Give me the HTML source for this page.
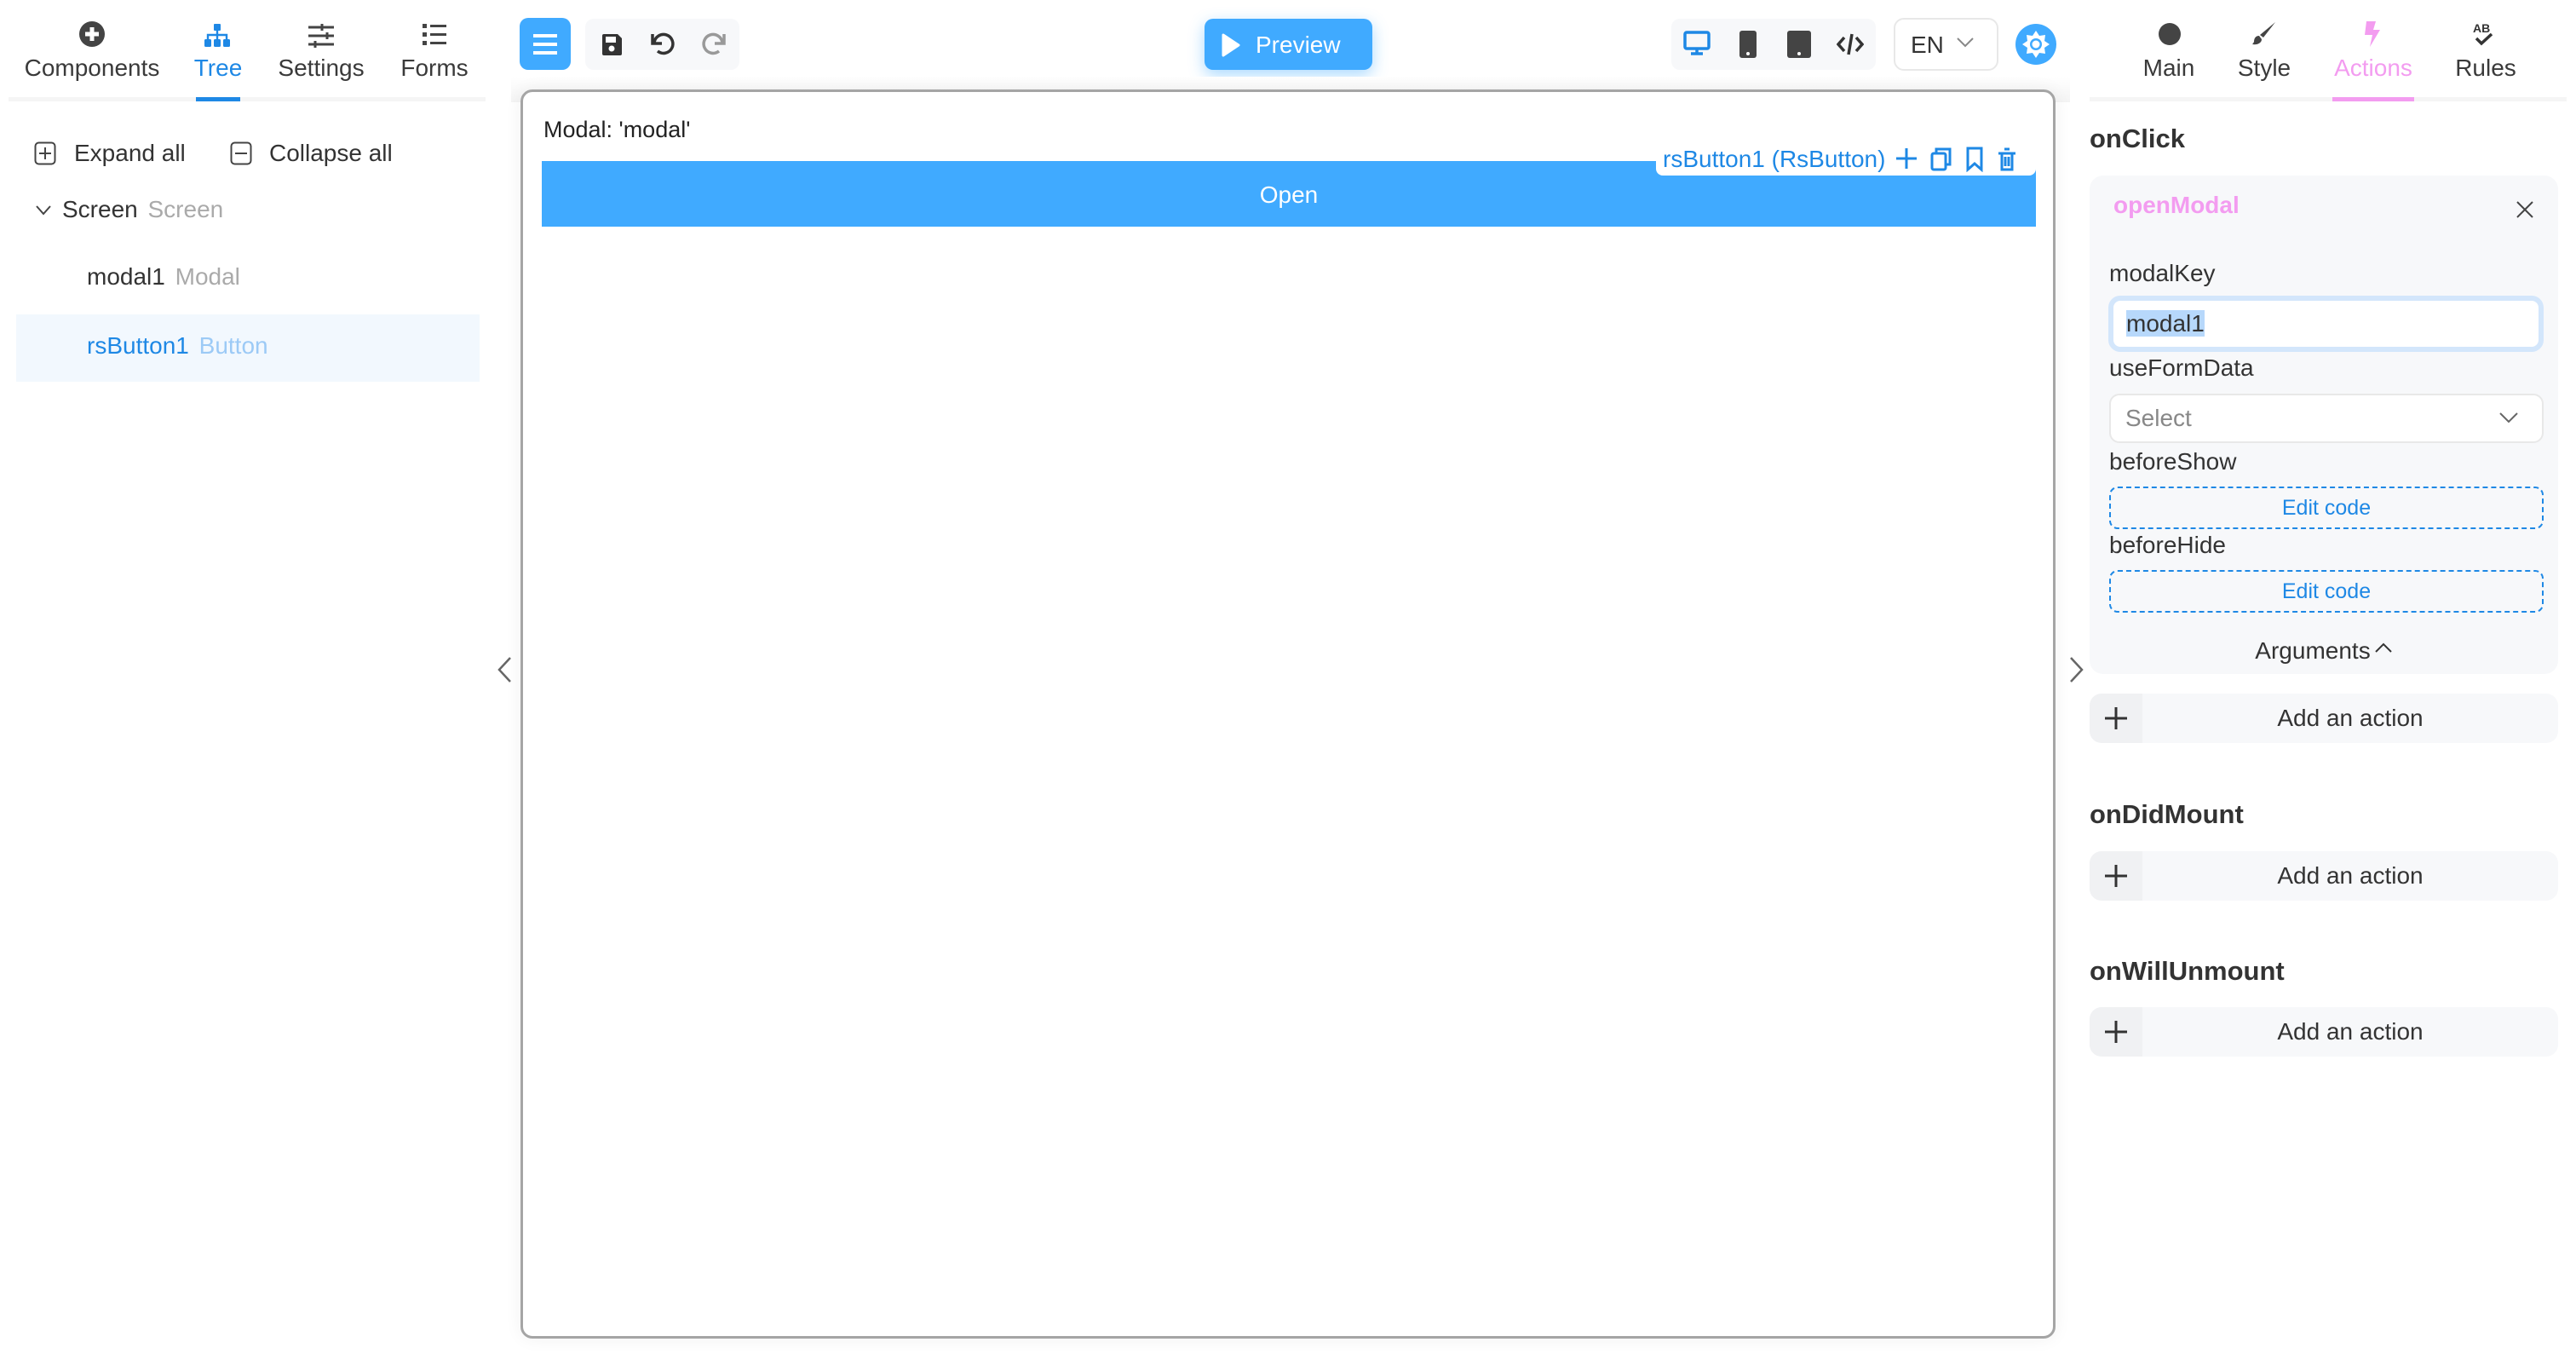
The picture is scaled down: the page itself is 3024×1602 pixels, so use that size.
<!DOCTYPE html>
<html><head><meta charset="utf-8"><style>
*{box-sizing:border-box;margin:0;padding:0}
body{width:3024px;height:1602px;background:#fff;font-family:"Liberation Sans",sans-serif;color:#333;position:relative;overflow:hidden}
.a{position:absolute}
.t{font-size:28px;white-space:nowrap}
.lbl{position:absolute;font-size:28px;color:#333;white-space:nowrap}
.tab{position:absolute;top:64px;font-size:28px;transform:translateX(-50%);white-space:nowrap;color:#3a3a3a}
.row{position:absolute;left:2453px;width:550px;height:58px;background:#f7f8fa;border-radius:14px;overflow:hidden}
.row .p{position:absolute;left:0;top:0;width:62px;height:58px;background:#f0f1f3}
.row .tx{position:absolute;left:62px;right:0;top:0;line-height:58px;text-align:center;font-size:28px;color:#333}
.h{position:absolute;left:2453px;font-size:31px;font-weight:bold;color:#333}
.ec{position:absolute;left:2476px;width:510px;height:50px;border:2px dashed #1e88e5;border-radius:10px;color:#1e88e5;text-align:center;line-height:46px;font-size:25px}
</style></head><body>

<!-- left tabs -->
<svg class="a" style="left:92px;top:24px" width="32" height="32" viewBox="0 0 32 32"><circle cx="16" cy="16" r="15" fill="#444"/><path d="M16 8v16M8 16h16" stroke="#fff" stroke-width="5"/></svg>
<svg class="a" style="left:240px;top:28px" width="30" height="28" viewBox="0 0 30 28"><g fill="#1e88e5"><rect x="11" y="0" width="8" height="8" rx="1"/><rect x="0" y="18" width="8" height="9" rx="1.5"/><rect x="11" y="18" width="8" height="9" rx="1.5"/><rect x="22" y="18" width="8" height="9" rx="1.5"/></g><path d="M15 8v10M4 18v-5h22v5" stroke="#1e88e5" stroke-width="2.4" fill="none"/></svg>
<svg class="a" style="left:362px;top:28px" width="30" height="28" viewBox="0 0 30 28"><g stroke="#444" stroke-width="3"><path d="M0 4h30M0 14h30M0 24h30"/><path d="M16 0v8M22 10v8M8 20v8"/></g></svg>
<svg class="a" style="left:496px;top:28px" width="28" height="26" viewBox="0 0 28 26"><g fill="#444"><rect x="0" y="0" width="5" height="5"/><rect x="0" y="10" width="5" height="5"/><rect x="0" y="20" width="5" height="5"/><rect x="9" y="1" width="19" height="3"/><rect x="9" y="11" width="19" height="3"/><rect x="9" y="21" width="19" height="3"/></g></svg>
<div class="tab" style="left:108px">Components</div>
<div class="tab" style="left:256px;color:#1e88e5">Tree</div>
<div class="tab" style="left:377px">Settings</div>
<div class="tab" style="left:510px">Forms</div>
<div class="a" style="left:10px;top:114px;width:560px;height:5px;background:#f5f5f5"></div>
<div class="a" style="left:230px;top:114px;width:52px;height:5px;background:#1e88e5"></div>

<!-- expand/collapse -->
<svg class="a" style="left:40px;top:166px" width="26" height="28" viewBox="0 0 26 28"><rect x="1.5" y="1.5" width="23" height="25" rx="4" fill="none" stroke="#444" stroke-width="2"/><path d="M13 7v14M6 14h14" stroke="#444" stroke-width="2"/></svg>
<div class="lbl" style="left:87px;top:164px">Expand all</div>
<svg class="a" style="left:270px;top:166px" width="26" height="28" viewBox="0 0 26 28"><rect x="1.5" y="1.5" width="23" height="25" rx="4" fill="none" stroke="#444" stroke-width="2"/><path d="M6 14h14" stroke="#444" stroke-width="2"/></svg>
<div class="lbl" style="left:316px;top:164px">Collapse all</div>
<svg class="a" style="left:42px;top:241px" width="18" height="12" viewBox="0 0 18 12"><path d="M1 1l8 9 8-9" stroke="#444" stroke-width="2" fill="none"/></svg>
<div class="lbl" style="left:73px;top:230px">Screen <span style="color:#aaa;margin-left:4px">Screen</span></div>
<div class="lbl" style="left:102px;top:309px">modal1 <span style="color:#aaa;margin-left:4px">Modal</span></div>
<div class="a" style="left:19px;top:369px;width:544px;height:79px;background:#f2f8fe"></div>
<div class="lbl" style="left:102px;top:390px;color:#1e88e5">rsButton1 <span style="color:#9ccaf6;margin-left:4px">Button</span></div>

<!-- toolbar -->
<div class="a" style="left:610px;top:21px;width:60px;height:61px;background:#40aaff;border-radius:10px"></div>
<svg class="a" style="left:625px;top:39px" width="30" height="26" viewBox="0 0 30 26"><path d="M1 3h28M1 13h28M1 23h28" stroke="#fff" stroke-width="4"/></svg>
<div class="a" style="left:687px;top:22px;width:181px;height:60px;background:#f7f8fa;border-radius:10px"></div>
<svg class="a" style="left:705px;top:38px" width="26" height="28" viewBox="0 0 26 28"><path d="M2 4a2 2 0 012-2h16l5 5v18a2 2 0 01-2 2H4a2 2 0 01-2-2z" fill="#333"/><rect x="6" y="5" width="12" height="7" fill="#fff"/><circle cx="13" cy="19" r="3.5" fill="#fff"/></svg>
<svg class="a" style="left:762px;top:36px" width="32" height="32" viewBox="0 0 32 32"><path d="M6 14a11 11 0 1 1 4 10" stroke="#333" stroke-width="3.5" fill="none"/><path d="M4 4v11h11" stroke="#333" stroke-width="3.5" fill="none"/></svg>
<svg class="a" style="left:822px;top:36px" width="32" height="32" viewBox="0 0 32 32"><path d="M26 14a11 11 0 1 0-4 10" stroke="#999" stroke-width="3.5" fill="none"/><path d="M28 4v11H17" stroke="#999" stroke-width="3.5" fill="none"/></svg>

<div class="a" style="left:1414px;top:22px;width:197px;height:60px;background:#40aaff;border-radius:10px;box-shadow:0 6px 18px rgba(64,170,255,.45)"></div>
<svg class="a" style="left:1434px;top:38px" width="22" height="30" viewBox="0 0 22 30"><path d="M2 3l18 12L2 27z" fill="#fff" stroke="#fff" stroke-width="3" stroke-linejoin="round"/></svg>
<div class="a t" style="left:1474px;top:37px;color:#fff">Preview</div>

<div class="a" style="left:1962px;top:22px;width:240px;height:60px;background:#f7f8fa;border-radius:10px"></div>
<svg class="a" style="left:1976px;top:36px" width="32" height="30" viewBox="0 0 32 30"><rect x="2" y="2" width="28" height="19" rx="2" fill="none" stroke="#1e88e5" stroke-width="3.5"/><path d="M16 21v5M9 27h14" stroke="#1e88e5" stroke-width="3.5"/></svg>
<svg class="a" style="left:2042px;top:36px" width="20" height="32" viewBox="0 0 20 32"><rect x="0" y="0" width="20" height="32" rx="3" fill="#444"/><circle cx="10" cy="27" r="2" fill="#fff"/></svg>
<svg class="a" style="left:2098px;top:36px" width="28" height="32" viewBox="0 0 28 32"><rect x="0" y="0" width="28" height="32" rx="3" fill="#444"/><circle cx="14" cy="27" r="2" fill="#fff"/></svg>
<svg class="a" style="left:2156px;top:38px" width="32" height="28" viewBox="0 0 32 28"><path d="M9 6l-7 8 7 8M23 6l7 8-7 8M18 2l-4 24" stroke="#333" stroke-width="3.5" fill="none"/></svg>
<div class="a" style="left:2223px;top:21px;width:123px;height:62px;border:2px solid #e8e8e8;border-radius:12px"></div>
<div class="a t" style="left:2243px;top:37px;color:#333">EN</div>
<svg class="a" style="left:2297px;top:44px" width="20" height="12" viewBox="0 0 20 12"><path d="M1 1l9 9 9-9" stroke="#888" stroke-width="2" fill="none"/></svg>
<svg class="a" style="left:2366px;top:28px" width="48" height="48" viewBox="0 0 48 48"><circle cx="24" cy="24" r="24" fill="#40aaff"/><path d="M24 8l4 6 7-1-1 7 6 4-6 4 1 7-7-1-4 6-4-6-7 1 1-7-6-4 6-4-1-7 7 1z" fill="#fff"/><circle cx="24" cy="24" r="7" fill="#40aaff"/><circle cx="24" cy="24" r="4.5" fill="#fff"/></svg>

<!-- canvas -->
<div class="a" style="left:600px;top:90px;width:1830px;height:30px;background:linear-gradient(#fff,#f4f4f4)"></div>
<div class="a" style="left:611px;top:105px;width:1802px;height:1466px;border:3px solid #a5a5a5;border-radius:14px;background:#fff;box-shadow:0 0 20px rgba(0,0,0,.06)"></div>
<div class="a t" style="left:638px;top:137px;color:#222;font-size:27px">Modal: 'modal'</div>
<div class="a" style="left:636px;top:189px;width:1754px;height:77px;background:#40aaff;border:2px solid #40aaff"></div>
<div class="a t" style="left:636px;width:1754px;top:213px;text-align:center;color:#fff">Open</div>
<div class="a" style="left:1944px;top:168px;width:446px;height:38px;background:#fff;border-radius:0 0 8px 8px"></div>
<div class="a t" style="left:1952px;top:171px;color:#1e88e5">rsButton1 (RsButton)</div>
<svg class="a" style="left:2226px;top:172px" width="140" height="30" viewBox="0 0 140 30"><g stroke="#1e88e5" stroke-width="3" fill="none"><path d="M12 2v24M0 14h24"/><rect x="42" y="8" width="16" height="19" rx="2"/><path d="M47 8V3h16v18h-5"/><path d="M84 2h16v25l-8-7-8 7z"/><path d="M120 8h20M124 8v19h12V8M127 3h6M128 12v11M132 12v11"/></g></svg>
<svg class="a" style="left:582px;top:770px" width="20" height="32" viewBox="0 0 20 32"><path d="M17 2L4 16l13 14" stroke="#666" stroke-width="2.5" fill="none"/></svg>
<svg class="a" style="left:2428px;top:770px" width="20" height="32" viewBox="0 0 20 32"><path d="M3 2l13 14L3 30" stroke="#666" stroke-width="2.5" fill="none"/></svg>

<!-- right tabs -->
<svg class="a" style="left:2533px;top:26px" width="28" height="28"><circle cx="14" cy="14" r="13" fill="#444"/></svg>
<svg class="a" style="left:2644px;top:25px" width="28" height="30" viewBox="0 0 28 30"><path d="M27 1L13 19l-4-3z" fill="#444"/><path d="M8 17c-4 0-6 3-6 7-1 2-2 3-2 3 5 1 11-1 11-6z" fill="#444"/></svg>
<svg class="a" style="left:2774px;top:25px" width="22" height="30" viewBox="0 0 22 30"><path d="M4 0h11l-3 10h8L8 30l3-14H2z" fill="#f39cf0"/></svg>
<div class="a" style="left:2903px;top:25px;font-size:14px;font-weight:bold;color:#333">AB</div>
<svg class="a" style="left:2905px;top:38px" width="22" height="16" viewBox="0 0 22 16"><path d="M2 7l6 6L20 2" stroke="#333" stroke-width="3.5" fill="none"/></svg>
<div class="tab" style="left:2546px">Main</div>
<div class="tab" style="left:2658px">Style</div>
<div class="tab" style="left:2786px;color:#f39cf0">Actions</div>
<div class="tab" style="left:2918px">Rules</div>
<div class="a" style="left:2453px;top:114px;width:560px;height:5px;background:#f5f5f5"></div>
<div class="a" style="left:2738px;top:114px;width:96px;height:5px;background:#f39cf0"></div>

<div class="h" style="top:145px">onClick</div>
<div class="a" style="left:2453px;top:206px;width:550px;height:585px;background:#f7f8fa;border-radius:16px"></div>
<div class="a" style="left:2481px;top:225px;font-size:28px;font-weight:bold;color:#f39cf0">openModal</div>
<svg class="a" style="left:2954px;top:236px" width="20" height="20" viewBox="0 0 20 20"><path d="M1 1l18 18M19 1L1 19" stroke="#444" stroke-width="2"/></svg>
<div class="lbl" style="left:2476px;top:305px">modalKey</div>
<div class="a" style="left:2475px;top:347px;width:511px;height:66px;border:6px solid #d3e6fb;border-radius:14px;background:#fff"></div>
<div class="a t" style="left:2496px;top:364px"><span style="background:#b7d8fb;color:#333">modal1</span></div>
<div class="lbl" style="left:2476px;top:416px">useFormData</div>
<div class="a" style="left:2476px;top:462px;width:510px;height:58px;border:2px solid #e8e8e8;border-radius:12px;background:#fff"></div>
<div class="a t" style="left:2495px;top:475px;color:#888">Select</div>
<svg class="a" style="left:2934px;top:484px" width="22" height="13" viewBox="0 0 22 13"><path d="M1 1l10 10 10-10" stroke="#666" stroke-width="2" fill="none"/></svg>
<div class="lbl" style="left:2476px;top:526px">beforeShow</div>
<div class="ec" style="top:571px">Edit code</div>
<div class="lbl" style="left:2476px;top:624px">beforeHide</div>
<div class="ec" style="top:669px">Edit code</div>
<div class="a t" style="left:2453px;width:550px;top:748px;text-align:center">Arguments<svg width="22" height="14" viewBox="0 0 22 14" style="margin-left:4px;vertical-align:6px"><path d="M2 12l9-9 9 9" stroke="#333" stroke-width="2" fill="none"/></svg></div>

<div class="row" style="top:814px"><div class="p"></div><svg class="a" style="left:16px;top:14px" width="30" height="30"><path d="M15 2v26M2 15h26" stroke="#333" stroke-width="3"/></svg><div class="tx">Add an action</div></div>
<div class="h" style="top:938px">onDidMount</div>
<div class="row" style="top:999px"><div class="p"></div><svg class="a" style="left:16px;top:14px" width="30" height="30"><path d="M15 2v26M2 15h26" stroke="#333" stroke-width="3"/></svg><div class="tx">Add an action</div></div>
<div class="h" style="top:1122px">onWillUnmount</div>
<div class="row" style="top:1182px"><div class="p"></div><svg class="a" style="left:16px;top:14px" width="30" height="30"><path d="M15 2v26M2 15h26" stroke="#333" stroke-width="3"/></svg><div class="tx">Add an action</div></div>
</body></html>
